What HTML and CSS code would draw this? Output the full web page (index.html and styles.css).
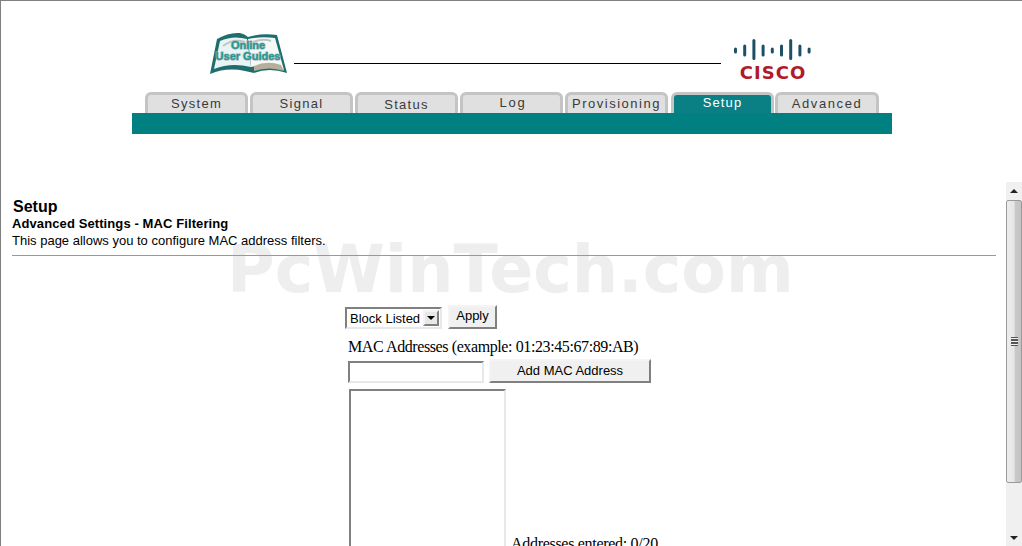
FILE: index.html
```html
<!DOCTYPE html>
<html lang="en">
<head>
    <meta charset="UTF-8">
    <title>Setup - Advanced Settings - MAC Filtering</title>
    <link rel="stylesheet" href="styles.css">
</head>
<body>

<div class="page">
    <div class="header">
        <div class="logo-row">
            <svg class="book-logo" width="80" height="48" viewBox="0 0 80 48">
                <path d="M1 44 L8 9 Q20 2 31 3 Q36 4 39 7 Q52 3 68 5 L78 43 Q60 37 45 43 L36 41 Q18 37 1 44 Z" fill="#1e6e6c"/>
                <path d="M5 39 L11 11 Q24 5 38 9 L42 37 Q22 32 5 39 Z" fill="#e9f5f4"/>
                <path d="M39 9 Q52 6 66 8 L75 40 Q58 33 42 37 Z" fill="#f4f8f6"/>
                <path d="M45 36 Q58 30 72 35 L75 41 Q60 36 45 41 Z" fill="#b5ae9a"/>
                <path d="M14 16 Q24 8 36 12 M44 12 Q54 8 62 11" fill="none" stroke="#b9c6c6" stroke-width="2"/>
                <text class="book-text" x="39" y="19" text-anchor="middle">Online</text>
                <text class="book-text" x="39" y="30" text-anchor="middle">User Guides</text>
            </svg>
            <div class="logo-line"></div>
            <div class="cisco-logo">
                <svg width="79" height="22" viewBox="0 0 79 22">
                    <g stroke="#1d4f68" stroke-width="3" stroke-linecap="round">
                        <path d="M2.5 10v3"/><path d="M11.7 7v9"/><path d="M20.9 1.500v18"/><path d="M30.100 7v9"/>
                        <path d="M39.300 10v3"/><path d="M48.500 7v9"/><path d="M57.700 1.500v18"/><path d="M66.900 7v9"/>
                        <path d="M76.100 10v3"/>
                    </g>
                </svg>
                <div class="cisco-name">CISCO</div>
            </div>
        </div>
        <div class="tabs">
            <div class="tab">System</div>
            <div class="tab">Signal</div>
            <div class="tab tab-low">Status</div>
            <div class="tab tab-high">Log</div>
            <div class="tab tab-provisioning">Provisioning</div>
            <div class="tab tab-active">Setup</div>
            <div class="tab tab-last">Advanced</div>
        </div>
        <div class="tab-bar"></div>
    </div>

    <div class="frame">
        <div class="content">
            <div class="watermark">PcWinTech.com</div>
            <div class="page-title">Setup</div>
            <div class="page-sub">Advanced Settings - MAC Filtering</div>
            <div class="page-desc">This page allows you to configure MAC address filters.</div>
            <hr class="rule">

            <div class="mac-form">
                <div class="form-row">
                    <div class="select-box">
                        <span>Block Listed</span>
                        <span class="select-arrow"></span>
                    </div>
                    <button class="btn btn-apply">Apply</button>
                </div>
                <div class="mac-label">MAC Addresses (example: 01:23:45:67:89:AB)</div>
                <div class="form-row add-row">
                    <input class="mac-input" type="text">
                    <button class="btn btn-add">Add MAC Address</button>
                </div>
                <div class="list-row">
                    <div class="mac-list"></div>
                    <div class="mac-count">Addresses entered: 0/20</div>
                </div>
            </div>
        </div>

        <div class="scrollbar">
            <div class="scroll-btn"><span class="arrow-up"></span></div>
            <div class="scroll-thumb"><span class="grip"></span></div>
            <div class="scroll-track"><span class="arrow-down"></span></div>
        </div>
    </div>
</div>

</body>
</html>
```

FILE: styles.css
```css
html, body {
    margin: 0;
    height: 100%;
    overflow: hidden;
    background-color: #ffffff;
}
.page {
    height: 546px;
    box-sizing: border-box;
    border-top: 1px solid #808080;
    border-left: 1px solid #808080;
    display: flex;
    flex-direction: column;
    overflow: hidden;
    font-family: "Liberation Sans", Arial, sans-serif;
    color: #000000;
}
.header {
    height: 181px;
    flex: none;
    margin-left: 131px;
    width: 760px;
}
.logo-row {
    height: 91px;
    display: flex;
    align-items: flex-start;
    padding-left: 77px;
    box-sizing: border-box;
}
.book-logo {
    margin-top: 29px;
    flex: none;
}
.book-text {
    font-family: "Liberation Sans", Arial, sans-serif;
    font-weight: bold;
    font-size: 11px;
    fill: #1f9a96;
    stroke: #9fb0b0;
    stroke-width: 1.2px;
    paint-order: stroke;
}
.logo-line {
    width: 427px;
    height: 1px;
    margin: 62px 0 0 5px;
    background-color: #000000;
    flex: none;
}
.cisco-logo {
    margin: 38px 0 0 12px;
    width: 79px;
    flex: none;
}
.cisco-logo svg {
    display: block;
}
.cisco-name {
    font-family: "DejaVu Sans", sans-serif;
    font-weight: bold;
    font-size: 18px;
    line-height: 18px;
    letter-spacing: 1px;
    color: #b01a2b;
    text-align: center;
    margin: 3px 0 0 1px;
}
.tabs {
    height: 21px;
    display: flex;
    gap: 2px;
    padding-left: 13px;
}
.tab {
    width: 103px;
    box-sizing: border-box;
    border: 3px solid #c4c4c4;
    border-bottom: none;
    border-radius: 6px 6px 0 0;
    background-color: #e0e0e0;
    font-size: 13px;
    letter-spacing: 1.3px;
    line-height: 17px;
    text-align: center;
    color: #3a3a3a;
}
.tab-low {
    line-height: 19px;
}
.tab-high {
    line-height: 15px;
    letter-spacing: 1.8px;
    padding-left: 3px;
}
.tab-provisioning {
    letter-spacing: 1.5px;
    margin-right: 1px;
}
.tab-active {
    background-color: #0a8085;
    color: #ffffff;
    line-height: 15px;
    letter-spacing: 1.1px;
    margin-right: -1px;
}
.tab-last {
    width: 104px;
    letter-spacing: 1.6px;
}
.tab-bar {
    height: 21px;
    background-color: #008080;
}
.frame {
    flex: 1;
    min-height: 0;
    display: flex;
}
.content {
    flex: 1;
    position: relative;
    padding: 16px 10px 0 11px;
    overflow: hidden;
}
.watermark {
    position: absolute;
    left: 226px;
    top: 48px;
    font-family: "DejaVu Sans", sans-serif;
    font-weight: bold;
    font-size: 65px;
    line-height: 80px;
    color: #eeeeee;
    white-space: nowrap;
}
.page-title {
    position: relative;
    font-size: 16px;
    font-weight: bold;
    line-height: 18px;
    margin-left: 1px;
}
.page-sub {
    position: relative;
    font-size: 13px;
    font-weight: bold;
    line-height: 16px;
    letter-spacing: 0.1px;
}
.page-desc {
    position: relative;
    font-size: 13px;
    line-height: 17px;
}
.rule {
    position: relative;
    height: 1px;
    border: none;
    background-color: #999999;
    margin: 6px 0 0;
}
.mac-form {
    position: relative;
    margin: 49px 0 0 333px;
}
.form-row {
    display: flex;
    align-items: flex-end;
}
.select-box {
    width: 97px;
    height: 22px;
    box-sizing: border-box;
    display: flex;
    align-items: center;
    justify-content: space-between;
    border: 2px solid;
    border-color: #808080 #e8e8e8 #e8e8e8 #808080;
    padding: 0 1px 0 3px;
    font-size: 13px;
    white-space: nowrap;
    background-color: #ffffff;
}
.select-arrow {
    width: 16px;
    height: 16px;
    box-sizing: border-box;
    border: 2px solid;
    border-color: #f4f4f4 #808080 #808080 #f4f4f4;
    background: #e8e8e8;
    position: relative;
}
.select-arrow::after {
    content: "";
    position: absolute;
    left: 2px;
    top: 4px;
    border: 4px solid transparent;
    border-top: 4px solid #000000;
    border-bottom: none;
}
.btn {
    box-sizing: border-box;
    border: 2px solid;
    border-color: #f4f4f4 #808080 #808080 #f4f4f4;
    background-color: #f0f0f0;
    font-family: "Liberation Sans", Arial, sans-serif;
    font-size: 13px;
    color: #000000;
    padding: 0;
}
.btn-apply {
    width: 49px;
    height: 24px;
    margin-left: 6px;
    padding-bottom: 3px;
}
.mac-label {
    font-family: "Liberation Serif", "Times New Roman", serif;
    font-size: 16px;
    line-height: 18px;
    letter-spacing: -0.4px;
    margin: 9px 0 0 3px;
}
.add-row {
    margin: 3px 0 0 3px;
}
.mac-input {
    width: 136px;
    height: 22px;
    box-sizing: border-box;
    border: 2px solid;
    border-color: #808080 #e8e8e8 #e8e8e8 #808080;
    padding: 0;
    margin: 0;
    background-color: #ffffff;
}
.btn-add {
    width: 162px;
    height: 24px;
    margin-left: 5px;
    padding-bottom: 2px;
}
.list-row {
    display: flex;
    align-items: flex-start;
    margin: 6px 0 0 4px;
}
.mac-list {
    width: 157px;
    height: 300px;
    box-sizing: border-box;
    border: 2px solid;
    border-color: #808080 #e8e8e8 #e8e8e8 #808080;
    flex: none;
}
.mac-count {
    font-family: "Liberation Serif", "Times New Roman", serif;
    font-size: 16px;
    line-height: 18px;
    letter-spacing: -0.3px;
    margin: 146px 0 0 5px;
    white-space: nowrap;
}
.scrollbar {
    width: 16px;
    flex: none;
    display: flex;
    flex-direction: column;
}
.scroll-btn {
    height: 18px;
    background-color: #f0f0f0;
    display: flex;
    align-items: center;
    justify-content: center;
    flex: none;
}
.arrow-up {
    border: 4px solid transparent;
    border-top: none;
    border-bottom: 4px solid #222222;
}
.scroll-thumb {
    height: 283px;
    box-sizing: border-box;
    flex: none;
    border: 1px solid #9a9a9a;
    border-radius: 2px;
    background: linear-gradient(90deg, #ececec 0%, #e6e6e6 50%, #c8c8c8 60%, #c4c4c4 100%);
    display: flex;
    align-items: center;
    justify-content: center;
}
.grip {
    width: 7px;
    height: 7px;
    border-top: 1px solid #555555;
    border-bottom: 1px solid #555555;
    background: linear-gradient(#f0f0f0 0 1px, #555555 1px 3px, #f0f0f0 3px 4px, #555555 4px 6px, #f0f0f0 6px);
}
.scroll-track {
    flex: 1;
    background-color: #f0f0f0;
    display: flex;
    align-items: flex-end;
    justify-content: center;
    padding-bottom: 6px;
}
.arrow-down {
    border: 4px solid transparent;
    border-bottom: none;
    border-top: 4px solid #222222;
}
```
